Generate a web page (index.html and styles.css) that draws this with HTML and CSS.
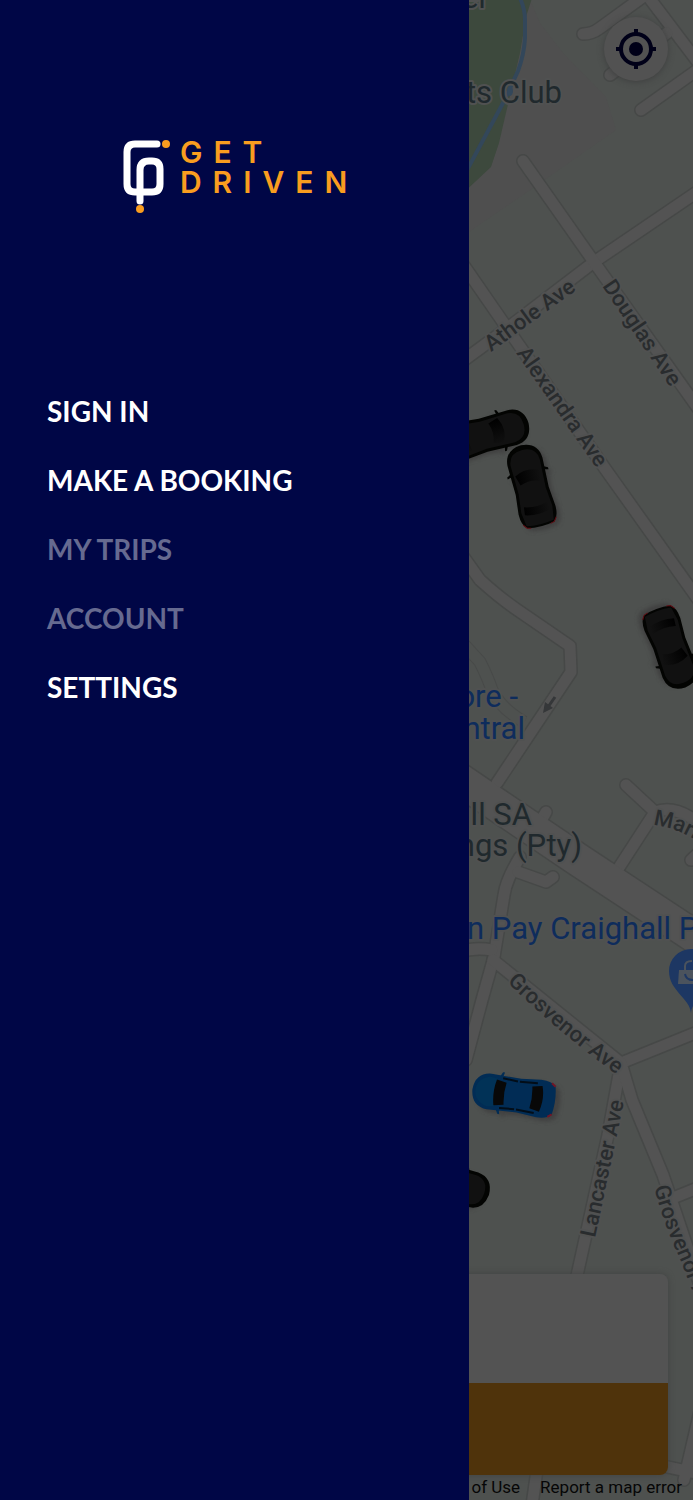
FILE: index.html
```html
<!DOCTYPE html>
<html lang="en">
<head>
<meta charset="utf-8">
<meta name="viewport" content="width=device-width, initial-scale=1">
<title>Get Driven</title>
<link rel="stylesheet" href="styles.css">
</head>
<body>
<div class="app">
  <svg class="map" viewBox="0 0 693 1500" preserveAspectRatio="xMaxYMin slice" role="img" aria-label="Map with nearby cars">
    <defs>
      <filter id="soft" x="-30%" y="-30%" width="160%" height="160%"><feGaussianBlur stdDeviation="2"/></filter>
      <linearGradient id="glass"><stop offset="0" stop-color="#000"/><stop offset="1" stop-color="#111"/></linearGradient>
      <g id="roads">
        <path d="M460 363L505 330L594 262L700 190"/>
        <path d="M523 161L594 262L700 411"/>
        <path d="M460 260L505 325L606 470L700 602"/>
        <path d="M647 -5L700 65"/>
        <path d="M583 34Q592 34 600 28L644 -4M610 75L667 33M641 110L700 68"/>
        <path d="M460 552L480 580Q500 598 516 609L570 646L571 672L497 783"/>
        <path d="M626 785L655 812L618 869M655 812Q675 804 700 824M691 860L700 852"/>
        <path d="M546 812L538 826M520 857Q506 880 504 895L494 957L482 1000L466 1060"/>
        <path d="M518 872L546 882L553 877M460 952Q475 947 492 950"/>
        <path d="M493 960L621 1063L700 1031M621 1063L608 1135L576 1280"/>
        <path d="M621 1063L632 1100L663 1175L705 1300M668 1200L700 1187"/>
        <path d="M640 1461L700 1474M684 1480L705 1390M537 1470L532 1505"/>
      </g>
      <g id="car">
        <path d="M-17 -16L-21 -14L-21 -12L-17 -13ZM17 -16L21 -14L21 -12L17 -13Z"/>
        <path d="M-18 -25Q-17 -41 0 -42Q17 -41 18 -25L17 5L19 25Q19 36 14 40Q0 43 -14 40Q-19 36 -19 25L-17 5Z"/>
      </g>
      <g id="blackcar">
        <use href="#car" fill="#3f3f3f" transform="translate(3 4)" filter="url(#soft)"/>
        <use href="#car" fill="#030402"/>
        <path d="M-15 -24Q-14 -37 0 -37Q14 -37 15 -24L14 5L16 24L14 38Q0 41 -14 38L-16 24L-14 5Z" fill="#111"/>
        <path d="M-13 -13Q0 -20 13 -13L10 -3Q0 -7 -10 -3ZM-12 19Q0 23 12 19L13 27Q0 31 -13 27Z" fill="url(#glass)"/>
        <path d="M-17 36L-14 40L-10 41M17 36L14 40L10 41" stroke="#610c12" stroke-width="1" fill="none"/>
      </g>
    </defs>

    <rect width="693" height="1500" fill="#4e514f"/>
    <path d="M460 -5H528L540 23L563 53L606 97L616 130L523 195L460 238Z" fill="#4f4f4f"/>
    <path d="M460 -5H533L526 17L520 53L505 117L499 143L491 167L460 196Z" fill="#3d493d"/>
    <path d="M519 -4Q525 8 525 20V38Q524 55 518 71L503 103L466 172" fill="none" stroke="#33475a" stroke-width="4"/>
    <ellipse cx="510" cy="91" rx="3" ry="5" fill="#33475a"/>

    <path d="M460 640L480 662Q488 678 492 690Q500 708 524 722" fill="none" stroke="#484a49" stroke-width="13"/>
    <path d="M460 640L480 662Q488 678 492 690Q500 708 524 722" fill="none" stroke="#4e514f" stroke-width="11"/>
    <g class="road-edge">
      <use href="#roads"/>
      <path class="avenue-edge" d="M450 773L503 809L580 861L700 940"/>
    </g>
    <g class="road-fill">
      <use href="#roads"/>
      <path class="avenue-fill" d="M450 773L503 809L580 861L700 940"/>
    </g>
    <path d="M555 697L548 707" stroke="#353739" stroke-width="3"/>
    <path d="M543 713L545 702L553 708Z" fill="#353739"/>

    <defs>
      <path id="gros" d="M507 982Q560 1034 620 1077"/>
      <path id="gros2" d="M654 1187Q664 1224 676 1250T705 1330"/>
      <path id="marl" d="M653 825Q682 828 710 850"/>
    </defs>
    <g class="street">
      <text transform="translate(491 352) rotate(-36)">Athole Ave</text>
      <text transform="translate(602 286) rotate(56)">Douglas Ave</text>
      <text transform="translate(516 353) rotate(55)">Alexandra Ave</text>
      <text><textPath href="#gros">Grosvenor Ave</textPath></text>
      <text transform="translate(595 1238) rotate(-78)">Lancaster Ave</text>
      <text><textPath href="#gros2">Grosvenor A</textPath></text>
      <text><textPath href="#marl">Marl</textPath></text>
    </g>
    <g class="place">
      <text x="489" y="8">er</text>
      <text x="562" y="103">ts Club</text>
      <text x="532" y="825">ll SA</text>
      <text x="582" y="856">ngs (Pty)</text>
    </g>
    <g class="place shop">
      <text x="518" y="707">ore -</text>
      <text x="525" y="739">ntral</text>
      <text class="from-left" x="467" y="939">n Pay Craighall Park</text>
    </g>
    <path d="M691 1013C690 998 669 991 669 971A22 22 0 0 1 713 971C713 991 692 998 691 1013Z" fill="#1d3763"/>
    <path d="M679 970H703V984H678Z" fill="#4b535d"/>
    <path d="M685 970V966Q685 961 692 961" fill="none" stroke="#4b535d" stroke-width="2"/>
    <path d="M685 974Q686 980 693 980" fill="none" stroke="#1d3763" stroke-width="2"/>

    <use href="#blackcar" transform="translate(488 434) rotate(75)"/>
    <use href="#blackcar" transform="translate(531 486) rotate(-14)"/>
    <use href="#blackcar" transform="translate(671 648) rotate(160)"/>
    <use href="#blackcar" transform="translate(449 1182) rotate(108)"/>
    <g transform="translate(514 1095) rotate(-82)">
      <use href="#car" fill="#3f3f3f" transform="translate(-3 5)" filter="url(#soft)"/>
      <use href="#car" fill="#012c55"/>
      <path d="M-15 -26Q-11 -39 0 -39T15 -26L14 -18H-14Z" fill="#013257"/>
      <path d="M-13 -19Q0 -22 13 -19L11 -9Q0 -11 -11 -9ZM-11 17Q0 19 11 17L13 27Q0 31 -13 27Z" fill="#080808"/>
      <path d="M-15 -13L-14 2M-14 4L-15 22M15 -13L14 2M14 4L15 22" stroke="#020d18" stroke-width="2"/>
      <path d="M-17 36L-14 40M17 36L14 40" stroke="#711626" stroke-width="2"/>
    </g>
  </svg>

  <main class="screen">
    <button class="locate" type="button" aria-label="Centre on my location">
      <svg class="locate-icon" viewBox="0 0 44 44" aria-hidden="true">
        <circle cx="22" cy="22" r="15" fill="none" stroke="#000018" stroke-width="4"/>
        <circle cx="22" cy="22" r="7" fill="#000018"/>
        <path d="M22 2V7M22 37V42M2 22H7M37 22H42" stroke="#000018" stroke-width="4"/>
      </svg>
    </button>
    <section class="card" aria-label="Booking">
      <div class="card-body"></div>
      <button class="card-action" type="button" aria-label="Continue"></button>
    </section>
    <footer class="legal">
      <a href="#terms">Terms of Use</a>
      <a href="#report">Report a map error</a>
    </footer>
  </main>

  <aside class="drawer">
    <div class="logo">
      <svg class="logo-mark" viewBox="0 -2 50 78" aria-hidden="true">
        <path d="M35 5H13Q5 5 5 13V45Q5 53 13 53H30Q38 53 38 45V30Q38 22 30 22H27Q18 22 18 31V62" fill="none" stroke="#fff" stroke-width="7" stroke-linecap="round"/>
        <circle cx="44" cy="5" r="4" fill="#f99d1f"/>
        <circle cx="18" cy="70" r="4" fill="#f99d1f"/>
      </svg>
      <div class="logo-name"><span>GET</span><span>DRIVEN</span></div>
    </div>
    <nav class="menu" aria-label="Main">
      <button type="button">SIGN IN</button>
      <button type="button">MAKE A BOOKING</button>
      <button type="button" disabled>MY TRIPS</button>
      <button type="button" disabled>ACCOUNT</button>
      <button type="button">SETTINGS</button>
    </nav>
  </aside>
</div>
</body>
</html>
```
FILE: styles.css
```css
* { box-sizing: border-box; }
body { margin: 0; background: #4e514f; }
button { border: 0; padding: 0; margin: 0; font: inherit; cursor: pointer; }

.app { position: relative; min-height: 100vh; display: flex; overflow: hidden; }
.map { position: absolute; inset: 0; width: 100%; height: 100%; }
.road-edge, .road-fill { fill: none; stroke-linecap: round; stroke-linejoin: round; }
.road-edge { stroke: #464847; stroke-width: 14; }
.road-fill { stroke: #535353; stroke-width: 11; }
.avenue-edge { stroke-width: 35; }
.avenue-fill { stroke-width: 32; }
.street { font: 500 22px Roboto, sans-serif; fill: #292c2e; }
.place { font: 400 31px Roboto, sans-serif; fill: #20292d; text-anchor: end; }
.shop { fill: #0e2c5c; }
.from-left { text-anchor: start; }
.street text, .place text { stroke: #505151; stroke-width: 4; stroke-linejoin: round; paint-order: stroke; }

.screen { position: relative; flex: 1; display: flex; flex-direction: column; padding: 17px 25px 1px; }
.locate {
  align-self: flex-end; display: grid; place-items: center;
  width: 64px; height: 64px; border-radius: 50%;
  background: #525252; box-shadow: 0 1px 6px #3e3f3f;
}
.locate-icon { width: 44px; height: 44px; }
.card { margin-top: auto; border-radius: 8px; overflow: hidden; box-shadow: 0 0 6px #414342; }
.card-body { height: 109px; background: #535353; }
.card-action { display: block; width: 100%; height: 92px; background: #4f330b; }
.legal {
  display: flex; justify-content: flex-end; gap: 20px;
  margin-right: -14px; font: 400 17px/24px Roboto, sans-serif;
}
.legal a { color: #060606; text-decoration: none; }

.drawer {
  position: absolute; inset: 0 auto 0 0; width: 67.7%;
  background: #000646; padding-top: 137px;
}
.logo { display: flex; justify-content: center; gap: 8px; }
.logo-mark { width: 50px; height: 78px; }
.logo-name {
  display: flex; flex-direction: column; color: #f99d1f;
  font: 600 30px/30px Inter, sans-serif; letter-spacing: 11px; margin-right: -11px;
}
.menu {
  display: flex; flex-direction: column; align-items: flex-start; gap: 33px;
  margin-top: 178px; padding-left: 47px;
}
.menu button { background: none; color: #fff; font: 700 28px/36px Lato, sans-serif; }
.menu button:disabled { color: #666a90; cursor: default; }
```
